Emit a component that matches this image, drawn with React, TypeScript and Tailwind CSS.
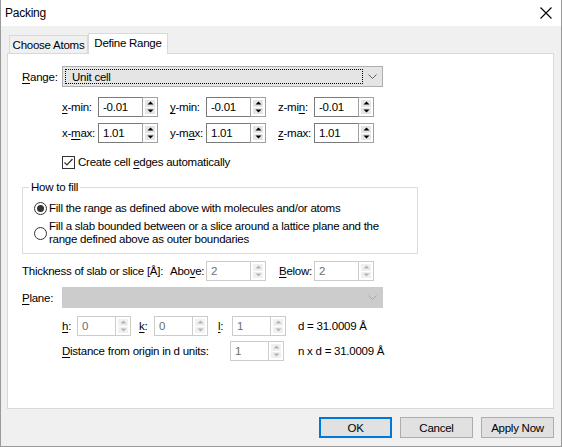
import React from 'react';

const U = ({ children }: { children: React.ReactNode }) => <span className="underline underline-offset-[2px]">{children}</span>;

function Arrow({ up, disabled }: { up?: boolean; disabled?: boolean }) {
  return (
    <svg width="7" height="4" viewBox="0 0 7 4">
      <polygon points={up ? '0.5,3.5 6.5,3.5 3.5,0.5' : '0.5,0.5 6.5,0.5 3.5,3.5'} fill={disabled ? '#b4b4b4' : '#000'} />
    </svg>
  );
}

function Spin({ value, w = 'w-[60px]', disabled }: { value: string; w?: string; disabled?: boolean }) {
  return (
    <div className={`flex h-[20px] ${w} bg-white`}>
      <div
        className={`flex-1 flex items-center pl-[4px] border border-r-0 ${
          disabled ? 'border-[#cccccc] text-[#6d6d6d]' : 'border-[#7a7a7a] text-black'
        }`}
      >
        {value}
      </div>
      <div className={`w-[16px] flex flex-col gap-[1px] p-[2px] border ${disabled ? 'border-[#cccccc]' : 'border-[#a0a0a0]'}`}>
        <div className={`flex-1 flex items-center justify-center ${disabled ? 'bg-[#f0f0f0]' : 'bg-[#e5e5e5]'}`}>
          <Arrow up disabled={disabled} />
        </div>
        <div className={`flex-1 flex items-center justify-center ${disabled ? 'bg-[#f0f0f0]' : 'bg-[#e5e5e5]'}`}>
          <Arrow disabled={disabled} />
        </div>
      </div>
    </div>
  );
}

function Chevron({ color }: { color: string }) {
  return (
    <svg width="9" height="5" viewBox="0 0 9 5">
      <polyline points="0.5,0.5 4.5,4.5 8.5,0.5" fill="none" stroke={color} strokeWidth="1" />
    </svg>
  );
}

function Radio({ checked }: { checked?: boolean }) {
  return (
    <div className="w-[13px] h-[13px] shrink-0 rounded-full border border-[#333333] bg-white flex items-center justify-center">
      {checked && <div className="w-[7px] h-[7px] rounded-full bg-[#333333]" />}
    </div>
  );
}

function Button({ label, primary }: { label: string; primary?: boolean }) {
  return (
    <div
      className={`w-[73px] h-[21px] flex items-center justify-center bg-[#e1e1e1] ${
        primary ? 'border-2 border-[#0078d7]' : 'border border-[#adadad]'
      }`}
    >
      {label}
    </div>
  );
}

export default function App() {
  const spinRows = [
    [
      { label: <><U>x</U>-min:</>, value: '-0.01' },
      { label: <><U>y</U>-min:</>, value: '-0.01' },
      { label: <>z-mi<U>n</U>:</>, value: '-0.01' },
    ],
    [
      { label: <>x-<U>m</U>ax:</>, value: '1.01' },
      { label: <>y-m<U>a</U>x:</>, value: '1.01' },
      { label: <><U>z</U>-max:</>, value: '1.01' },
    ],
  ];

  return (
    <div
      className="w-[562px] h-[447px] flex flex-col bg-[#f0f0f0] border-x border-b border-[#9a9a9a] text-[11.5px] leading-[14px] tracking-[-0.25px] text-black whitespace-nowrap overflow-hidden"
      style={{ fontFamily: '"Liberation Sans", Arial, sans-serif' }}
    >
      {/* title bar */}
      <div className="h-[26px] shrink-0 bg-white flex items-center justify-between pl-[4px] pr-[8px]">
        <span className="text-[12px]">Packing</span>
        <svg width="12" height="12" viewBox="0 0 12 12" className="mr-[1px]">
          <path d="M0.5 0.5 L11.5 11.5 M11.5 0.5 L0.5 11.5" stroke="#000" strokeWidth="1.1" />
        </svg>
      </div>

      <div className="pl-[6px] pr-[7px]">
        {/* tabs */}
        <div className="mt-[7px] h-[20px] flex items-end pl-[2px]">
          <div className="w-[79px] h-[18px] border border-b-0 border-[#d9d9d9] bg-[#f0f0f0] flex items-center justify-center pt-[1px]">
            Choose Atoms
          </div>
          <div className="relative z-10 w-[80px] h-[21px] -mb-[1px] border border-b-0 border-[#d9d9d9] bg-white flex items-center justify-center pb-[2px]">
            Define Range
          </div>
        </div>

        {/* panel */}
        <div className="h-[356px] border border-[#d9d9d9] bg-white flex flex-col pl-[14px]">
          <div className="mt-[12px] flex items-center h-[21px]">
            <div className="w-[40px]"><U>R</U>ange:</div>
            <div className="w-[321px] h-[21px] border border-[#adadad] bg-[#e5e5e5] flex items-center p-[2px]">
              <div className="w-[298px] h-full border border-dotted border-black flex items-center pl-[6px]">Unit cell</div>
              <div className="flex-1 flex justify-center pl-[2px]">
                <Chevron color="#606060" />
              </div>
            </div>
          </div>

          <div className="mt-[10px] pl-[40px] flex flex-col gap-[6px]">
            {spinRows.map((row, i) => (
              <div key={i} className="flex">
                {row.map((c, j) => (
                  <div key={j} className="w-[108px] flex items-center">
                    <div className="w-[36px]">{c.label}</div>
                    <Spin value={c.value} />
                  </div>
                ))}
              </div>
            ))}
          </div>

          <div className="mt-[12px] pl-[40px] flex items-center gap-[3px] h-[14px]">
            <div className="w-[13px] h-[13px] border border-[#333333] bg-white flex items-center justify-center">
              <svg width="11" height="11" viewBox="0 0 11 11">
                <polyline points="1.5,5.5 4,8 9.5,2" fill="none" stroke="#333" strokeWidth="1.2" />
              </svg>
            </div>
            <span>Create cell <U>e</U>dges automatically</span>
          </div>

          <fieldset className="mt-[11px] w-[396px] h-[74px] border border-[#dcdcdc]">
            <legend className="ml-[6px] px-[2px] leading-[14px]">How to fill</legend>
            <div className="mt-[7px] ml-[11px] flex items-center gap-[2px]">
              <Radio checked />
              <span>Fill the range as defined above with molecules and/or atoms</span>
            </div>
            <div className="mt-[5px] ml-[11px] flex items-center gap-[2px]">
              <Radio />
              <span className="leading-[13px]">
                Fill a slab bounded between or a slice around a lattice plane and the
                <br />
                range defined above as outer boundaries
              </span>
            </div>
          </fieldset>

          <div className="mt-[7px] flex items-center">
            <div className="w-[148px]">Thickness of slab or slice [Å]:</div>
            <div className="w-[36px]">Abo<U>v</U>e:</div>
            <Spin value="2" disabled />
            <div className="w-[48px] pl-[13px]"><U>B</U>elow:</div>
            <Spin value="2" disabled />
          </div>

          <div className="mt-[6px] flex items-center h-[21px]">
            <div className="w-[40px]"><U>P</U>lane:</div>
            <div className="w-[321px] h-[21px] border border-[#cccccc] bg-[#cccccc] flex items-center justify-end pr-[5px]">
              <Chevron color="#a8a8a8" />
            </div>
          </div>

          <div className="mt-[8px] pl-[40px] flex items-center">
            <div className="w-[15px]"><U>h</U>:</div>
            <Spin value="0" w="w-[54px]" disabled />
            <div className="w-[23px] pl-[8px]"><U>k</U>:</div>
            <Spin value="0" w="w-[54px]" disabled />
            <div className="w-[24px] pl-[10px]"><U>l</U>:</div>
            <Spin value="1" w="w-[54px]" disabled />
            <div className="pl-[12px]">d = 31.0009 Å</div>
          </div>

          <div className="mt-[5px] pl-[40px] flex items-center">
            <div className="w-[168px]"><U>D</U>istance from origin in d units:</div>
            <Spin value="1" w="w-[54px]" disabled />
            <div className="pl-[14px]">n x d = 31.0009 Å</div>
          </div>
        </div>

        {/* buttons */}
        <div className="mt-[8px] flex justify-end gap-[8px]">
          <Button label="OK" primary />
          <Button label="Cancel" />
          <Button label="Apply Now" />
        </div>
      </div>
    </div>
  );
}
